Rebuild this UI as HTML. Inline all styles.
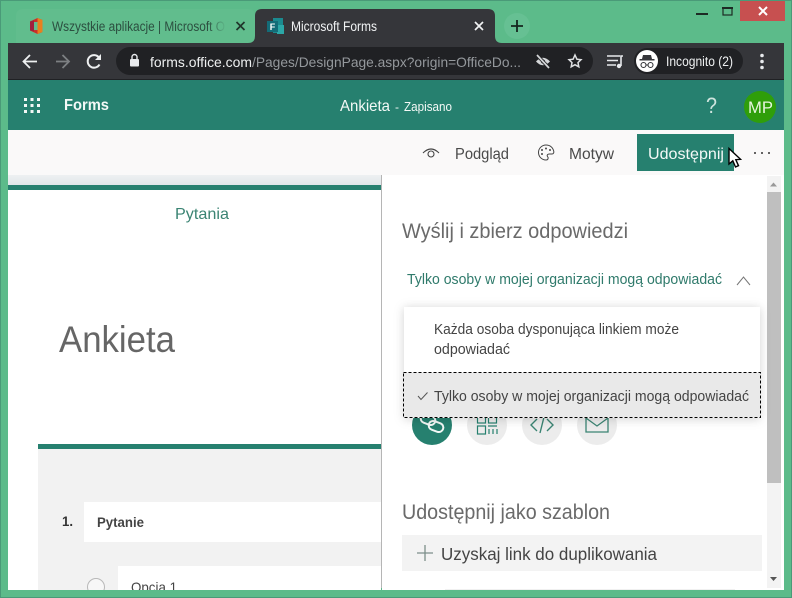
<!DOCTYPE html>
<html lang="pl"><head><meta charset="utf-8"><title>Microsoft Forms</title>
<style>
html,body{margin:0;padding:0;background:#5cbb8a;width:792px;height:598px;overflow:hidden}
svg{display:block;position:absolute;left:0;top:0}
text{font-family:"Liberation Sans",sans-serif;white-space:pre}
</style></head><body>
<svg width="792" height="598" viewBox="0 0 792 598" xmlns="http://www.w3.org/2000/svg">
<defs>
<linearGradient id="fade" x1="0" x2="1"><stop offset="0" stop-color="#61bd8d" stop-opacity="0"/><stop offset="1" stop-color="#61bd8d"/></linearGradient>
<linearGradient id="band" x1="0" x2="0" y1="0" y2="1"><stop offset="0" stop-color="#eef1f2"/><stop offset="1" stop-color="#e0e6e9"/></linearGradient>
<filter id="sh" x="-10%" y="-20%" width="120%" height="140%"><feDropShadow dx="0" dy="1" stdDeviation="5" flood-color="#000" flood-opacity=".18"/></filter>
<clipPath id="bot"><rect x="8" y="175" width="373" height="415"/></clipPath>
</defs>
<!-- frame -->
<rect width="792" height="598" fill="#5cbb8a"/>
<rect x=".5" y=".5" width="791" height="597" fill="none" stroke="#4a9a78"/>
<!-- tabs -->
<path d="M16 43V16Q16 9 23 9H248Q255 9 255 16V36Q255 43 248 43Z" fill="#61bd8d"/>
<path d="M248 43Q255 43 255 36V16Q255 9 262 9H488Q495 9 495 16V36Q495 43 502 43Z" fill="#35363a"/>
<path d="M30 21.500L37.500 18L42.500 20V32L37.500 34L30 30.500Z" fill="#c9302a"/><path d="M37.500 18L42.500 20V32L37.500 34Z" fill="#e8801e"/><path d="M30 21.500L34 20.500V31.500L30 30.500Z" fill="#a0203e"/><rect x="34" y="22" width="3.500" height="8" fill="#61bd8d"/>
<text x="52" y="31" font-size="13.500" fill="#2c4f40" textLength="173" lengthAdjust="spacingAndGlyphs">Wszystkie aplikacje | Microsoft O</text>
<rect x="208" y="15" width="18" height="20" fill="url(#fade)"/>
<path d="M236.500 22L244.500 30M244.500 22L236.500 30" stroke="#20352b" stroke-width="1.700"/>
<path d="M273 18H283V33H273Z" fill="#1b8a8f"/><path d="M277 25H284V34H277Z" fill="#2ca7a7"/><rect x="267" y="21" width="11" height="11" fill="#136c78"/>
<text x="269.800" y="30" font-size="9" font-weight="bold" fill="#fff">F</text>
<text x="291" y="31" font-size="13.500" fill="#f1f3f4" textLength="86" lengthAdjust="spacingAndGlyphs">Microsoft Forms</text>
<path d="M475 22L483 30M483 22L475 30" stroke="#f1f3f4" stroke-width="1.700"/>
<circle cx="517" cy="26" r="13" fill="#66c093"/>
<path d="M511 26H523M517 20V32" stroke="#15251e" stroke-width="1.800"/>
<!-- window controls -->
<rect x="696" y="13" width="12" height="2" fill="#1d2a24"/>
<rect x="723" y="8" width="9" height="7" fill="none" stroke="#1d2a24" stroke-width="1.200"/><rect x="722" y="7" width="11" height="2" fill="#1d2a24"/>
<rect x="740" y="1" width="45" height="20" fill="#c75050"/>
<path d="M759 7L767 15M767 7L759 15" stroke="#fff" stroke-width="2"/>
<!-- toolbar -->
<rect x="8" y="43" width="776" height="37" fill="#35363a"/>
<rect x="8" y="79" width="776" height="1" fill="#202124"/>
<path d="M37 61.500H24M30 55L23.500 61.500L30 68" fill="none" stroke="#eef0f1" stroke-width="1.800"/>
<path d="M69 61.500H56M62.500 55L69 61.500L62.500 68" fill="none" stroke="#7d8083" stroke-width="1.800"/>
<path d="M99.500 64.500A6.300 6.300 0 1 1 99 57.500" fill="none" stroke="#eef0f1" stroke-width="2"/><path d="M101 54V60H95Z" fill="#eef0f1"/>
<rect x="116" y="47" width="477" height="28" rx="14" fill="#202124"/>
<rect x="130" y="59" width="9" height="7.500" rx="1" fill="#e8eaed"/><path d="M132 59.500V57A2.500 2.500 0 0 1 137 57V59.500" fill="none" stroke="#e8eaed" stroke-width="1.400"/>
<text x="150" y="67" font-size="14" fill="#eef0f1" textLength="102" lengthAdjust="spacingAndGlyphs">forms.office.com</text>
<text x="252" y="67" font-size="14" fill="#94989c" textLength="269" lengthAdjust="spacingAndGlyphs">/Pages/DesignPage.aspx?origin=OfficeDo...</text>
<path d="M536 61.500Q543 54 550 61.500Q543 69 536 61.500Z" fill="#d4d6d8"/><circle cx="543" cy="61.500" r="2" fill="#202124"/><path d="M537 55L549 68" stroke="#202124" stroke-width="3.500"/><path d="M537 55L549 68" stroke="#d4d6d8" stroke-width="1.700"/>
<path d="M575 55L576.900 59.200L581 59.700L578 62.600L578.800 66.800L575 64.700L571.200 66.800L572 62.600L569 59.700L573.100 59.200Z" fill="none" stroke="#dfe1e3" stroke-width="1.500"/>
<path d="M607 56H620M607 60.500H618M607 65H616" stroke="#e8eaed" stroke-width="1.500"/><path d="M621 66V56H623" fill="none" stroke="#e8eaed" stroke-width="1.600"/><circle cx="619" cy="66" r="2.200" fill="#e8eaed"/>
<rect x="634" y="48" width="109" height="26" rx="13" fill="#202124"/>
<circle cx="647" cy="61" r="11" fill="#fff"/>
<path d="M643 55H651L652 59H642Z" fill="#35363a"/><rect x="639.500" y="59" width="15" height="1.500" fill="#35363a"/>
<circle cx="643.500" cy="65" r="2.500" fill="none" stroke="#35363a" stroke-width="1.100"/><circle cx="650.500" cy="65" r="2.500" fill="none" stroke="#35363a" stroke-width="1.100"/><path d="M646 65H648" stroke="#35363a"/>
<text x="666" y="66" font-size="13.500" fill="#eef0f1" textLength="67" lengthAdjust="spacingAndGlyphs">Incognito (2)</text>
<g fill="#e8eaed"><circle cx="762" cy="55.500" r="1.800"/><circle cx="762" cy="61.500" r="1.800"/><circle cx="762" cy="67.500" r="1.800"/></g>
<!-- forms header -->
<rect x="8" y="80" width="776" height="50" fill="#26806f"/>
<g fill="#f2f7f5"><rect x="24" y="98" width="3" height="3"/><rect x="30.500" y="98" width="3" height="3"/><rect x="37" y="98" width="3" height="3"/><rect x="24" y="104" width="3" height="3"/><rect x="30.500" y="104" width="3" height="3"/><rect x="37" y="104" width="3" height="3"/><rect x="24" y="110" width="3" height="3"/><rect x="30.500" y="110" width="3" height="3"/><rect x="37" y="110" width="3" height="3"/></g>
<text x="64" y="110" font-size="15.500" font-weight="bold" fill="#f4f9f7" textLength="45" lengthAdjust="spacingAndGlyphs">Forms</text>
<text x="340" y="111" font-size="16" fill="#f4f9f7" textLength="50" lengthAdjust="spacingAndGlyphs">Ankieta</text>
<text x="395" y="111" font-size="12" fill="#f4f9f7">-</text>
<text x="404" y="111" font-size="12.500" fill="#f4f9f7" textLength="48" lengthAdjust="spacingAndGlyphs">Zapisano</text>
<text x="706" y="113" font-size="22" fill="#cfe4de" textLength="11" lengthAdjust="spacingAndGlyphs">?</text>
<circle cx="760" cy="107" r="16" fill="#2f9e0a"/>
<text x="748" y="113" font-size="17" fill="#e6f5de" textLength="25" lengthAdjust="spacingAndGlyphs">MP</text>
<!-- command bar -->
<rect x="8" y="130" width="776" height="45" fill="#faf9f9"/>
<path d="M423 153Q431 145 439 153" fill="none" stroke="#444" stroke-width="1.100"/><circle cx="431" cy="154" r="3" fill="none" stroke="#444" stroke-width="1.100"/>
<text x="455" y="159" font-size="15.500" fill="#4a4a4a" textLength="54" lengthAdjust="spacingAndGlyphs">Podgląd</text>
<path d="M546 145A7.500 7.500 0 1 0 546 160C548.500 160 548.500 157.500 547.500 156.500C546.500 155 548 153.800 549.500 154H552C553.500 154 554 152.500 553.800 151.500C553 147.500 550 145 546 145Z" fill="none" stroke="#444" stroke-width="1"/>
<g fill="#444"><circle cx="542" cy="150" r="1"/><circle cx="546" cy="148.500" r="1"/><circle cx="550" cy="150" r="1"/><circle cx="542" cy="154" r="1"/></g>
<text x="569" y="159" font-size="15.500" fill="#4a4a4a" textLength="45" lengthAdjust="spacingAndGlyphs">Motyw</text>
<rect x="637" y="134" width="97" height="37" fill="#26806f"/>
<text x="648" y="159" font-size="16" fill="#f4f9f7" textLength="76" lengthAdjust="spacingAndGlyphs">Udostępnij</text>
<g fill="#333"><circle cx="755" cy="153" r="1"/><circle cx="762" cy="153" r="1"/><circle cx="769" cy="153" r="1"/></g>
<!-- left pane -->
<rect x="8" y="175" width="373" height="415" fill="#fff"/>
<rect x="8" y="175" width="373" height="10" fill="url(#band)"/>
<rect x="8" y="185" width="373" height="5" fill="#26806f"/>
<text x="175" y="219" font-size="16" fill="#3b8473" textLength="54" lengthAdjust="spacingAndGlyphs">Pytania</text>
<text x="59" y="352" font-size="37" fill="#666" textLength="116" lengthAdjust="spacingAndGlyphs">Ankieta</text>
<rect x="38" y="444" width="343" height="5" fill="#26806f"/>
<rect x="38" y="449" width="343" height="141" fill="#f2f2f2"/>
<text x="62" y="526" font-size="14" font-weight="bold" fill="#333" textLength="11" lengthAdjust="spacingAndGlyphs">1.</text>
<rect x="84" y="502" width="297" height="40" fill="#fff"/>
<text x="97" y="527" font-size="13.500" font-weight="bold" fill="#444" textLength="47" lengthAdjust="spacingAndGlyphs">Pytanie</text>
<g clip-path="url(#bot)">
<rect x="118" y="566" width="263" height="30" fill="#fff"/>
<circle cx="96" cy="587" r="8.500" fill="#f7f7f7" stroke="#b8b8b8" stroke-width="1"/>
<text x="131" y="592" font-size="14" fill="#444" textLength="46" lengthAdjust="spacingAndGlyphs">Opcja 1</text>
</g>
<rect x="381" y="175" width="1" height="413" fill="#b5b5b5"/>
<!-- right panel -->
<rect x="382" y="175" width="402" height="415" fill="#fff"/>
<rect x="767" y="176" width="14" height="412" fill="#f3f3f3"/>
<rect x="767" y="192" width="14" height="291" fill="#bfbfbf"/>
<path d="M770 186.500L773.500 182.500L777 186.500Z" fill="#999"/>
<path d="M770 577L773.500 581L777 577Z" fill="#555"/>
<text x="402" y="238" font-size="21" fill="#6a6a6a" textLength="226" lengthAdjust="spacingAndGlyphs">Wyślij i zbierz odpowiedzi</text>
<text x="407" y="284" font-size="14.500" fill="#2f7a6b" textLength="315" lengthAdjust="spacingAndGlyphs">Tylko osoby w mojej organizacji mogą odpowiadać</text>
<path d="M737 285L743.500 277L750 285" fill="none" stroke="#777" stroke-width="1"/>
<!-- share circles -->
<circle cx="432" cy="425" r="20" fill="#26806f"/>
<g fill="none" stroke="#f2f7f5" stroke-width="2"><rect x="420.500" y="415" width="15" height="9" rx="4.500" transform="rotate(20 428 419.500)"/><rect x="428.500" y="422" width="15" height="9" rx="4.500" transform="rotate(20 436 426.500)"/></g>
<circle cx="487" cy="425" r="20" fill="#ececec"/>
<g fill="none" stroke="#26806f" stroke-width="1.200"><rect x="477.500" y="414" width="8" height="9"/><rect x="488.500" y="414" width="8" height="9"/><rect x="477.500" y="426" width="8" height="8"/><path d="M488 426H497M489 429V434M493 429V434M497 429V434"/></g>
<circle cx="542" cy="425" r="20" fill="#ececec"/>
<path d="M537 419L531 425L537 431M547 419L553 425L547 431M544 417L540 433" fill="none" stroke="#3b8473" stroke-width="1.400"/>
<circle cx="597" cy="425" r="20" fill="#ececec"/>
<path d="M586 417H608V432H586ZM586 418L597 426L608 418" fill="none" stroke="#3b8473" stroke-width="1.300"/>
<!-- dropdown -->
<rect x="404" y="307" width="356" height="111" fill="#fff" filter="url(#sh)"/>
<text x="434" y="334" font-size="14.500" fill="#444" textLength="245" lengthAdjust="spacingAndGlyphs">Każda osoba dysponująca linkiem może</text>
<text x="434" y="354" font-size="14.500" fill="#444" textLength="76" lengthAdjust="spacingAndGlyphs">odpowiadać</text>
<rect x="403.500" y="372.500" width="357" height="45" fill="#e9e9e9" stroke="#000" stroke-width="1" stroke-dasharray="3 2"/>
<path d="M418 396L421 399.500L427.500 392.500" fill="none" stroke="#555" stroke-width="1"/>
<text x="434" y="401" font-size="14.500" fill="#444" textLength="315" lengthAdjust="spacingAndGlyphs">Tylko osoby w mojej organizacji mogą odpowiadać</text>
<!-- template -->
<text x="402" y="519" font-size="21" fill="#6a6a6a" textLength="208" lengthAdjust="spacingAndGlyphs">Udostępnij jako szablon</text>
<rect x="402" y="535" width="360" height="36" fill="#f3f3f3"/>
<path d="M417 553H433M425 545V561" stroke="#7d8f8a" stroke-width="1.300"/>
<text x="441" y="560" font-size="17.500" fill="#444" textLength="216" lengthAdjust="spacingAndGlyphs">Uzyskaj link do duplikowania</text>
<rect x="445" y="589" width="290" height="1" fill="#f0f0f0"/>
<!-- cursor -->
<path d="M729 148.500V164L732.800 160.800L735.500 167L738.500 165.700L735.800 159.700L740.500 159.300Z" fill="#fff" stroke="#000" stroke-width="1.400"/>
</svg>
</body></html>
